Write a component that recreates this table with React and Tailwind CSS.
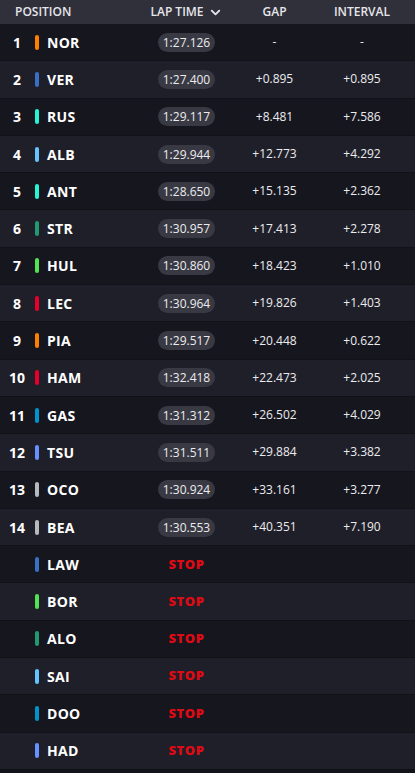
import { ChevronDown } from "lucide-react";

const drivers = [
  { pos: 1, code: "NOR", color: "#ff8000", lap: "1:27.126", gap: "-", int: "-" },
  { pos: 2, code: "VER", color: "#3671c6", lap: "1:27.400", gap: "+0.895", int: "+0.895" },
  { pos: 3, code: "RUS", color: "#27f4d2", lap: "1:29.117", gap: "+8.481", int: "+7.586" },
  { pos: 4, code: "ALB", color: "#64c4ff", lap: "1:29.944", gap: "+12.773", int: "+4.292" },
  { pos: 5, code: "ANT", color: "#27f4d2", lap: "1:28.650", gap: "+15.135", int: "+2.362" },
  { pos: 6, code: "STR", color: "#229971", lap: "1:30.957", gap: "+17.413", int: "+2.278" },
  { pos: 7, code: "HUL", color: "#52e252", lap: "1:30.860", gap: "+18.423", int: "+1.010" },
  { pos: 8, code: "LEC", color: "#e8002d", lap: "1:30.964", gap: "+19.826", int: "+1.403" },
  { pos: 9, code: "PIA", color: "#ff8000", lap: "1:29.517", gap: "+20.448", int: "+0.622" },
  { pos: 10, code: "HAM", color: "#e8002d", lap: "1:32.418", gap: "+22.473", int: "+2.025" },
  { pos: 11, code: "GAS", color: "#0093cc", lap: "1:31.312", gap: "+26.502", int: "+4.029" },
  { pos: 12, code: "TSU", color: "#6692ff", lap: "1:31.511", gap: "+29.884", int: "+3.382" },
  { pos: 13, code: "OCO", color: "#b6babd", lap: "1:30.924", gap: "+33.161", int: "+3.277" },
  { pos: 14, code: "BEA", color: "#b6babd", lap: "1:30.553", gap: "+40.351", int: "+7.190" },
  { pos: null, code: "LAW", color: "#3671c6", stop: true },
  { pos: null, code: "BOR", color: "#52e252", stop: true },
  { pos: null, code: "ALO", color: "#229971", stop: true },
  { pos: null, code: "SAI", color: "#64c4ff", stop: true },
  { pos: null, code: "DOO", color: "#0093cc", stop: true },
  { pos: null, code: "HAD", color: "#6692ff", stop: true },
];

const font = { fontFamily: '"Open Sans", "Liberation Sans", sans-serif' };

const App = () => {
  return (
    <div className="w-[415px] h-[773px] bg-[#13131b] text-white overflow-hidden" style={font}>
      <div className="flex items-center h-[24px] bg-[#30303b] text-[12px] font-semibold text-[#e6e6ea]">
        <div className="w-[142px] pl-[15px]">POSITION</div>
        <div className="w-[89px] flex items-center justify-center gap-[4px]">
          LAP TIME
          <ChevronDown size={15} strokeWidth={3} />
        </div>
        <div className="w-[87px] text-center">GAP</div>
        <div className="w-[88px] text-center">INTERVAL</div>
      </div>

      {drivers.map((d, i) => (
        <div
          key={d.code}
          className={`flex items-center h-[37.3px] border-b border-[#111118] ${
            i % 2 === 0 ? "bg-[#16161f]" : "bg-[#1f1f29]"
          }`}
        >
          <div className="w-[142px] flex items-center">
            <div className="w-[34px] text-center text-[14px] font-bold">{d.pos}</div>
            <div className="w-[4px] h-[15px] rounded-[2px] ml-[1px]" style={{ backgroundColor: d.color }} />
            <div className="ml-[8px] text-[14px] font-bold tracking-[0.3px]">{d.code}</div>
          </div>
          <div className="w-[89px] flex justify-center">
            {d.stop ? (
              <span className="text-[13px] font-extrabold text-[#de0a14] tracking-[0.6px]">STOP</span>
            ) : (
              <span className="bg-[#393943] rounded-full px-[5px] h-[19px] leading-[19px] text-[12px] font-medium text-[#ececef]">
                {d.lap}
              </span>
            )}
          </div>
          <div className="w-[87px] text-center text-[12px] font-medium text-[#ececef]">{d.gap}</div>
          <div className="w-[88px] text-center text-[12px] font-medium text-[#ececef]">{d.int}</div>
        </div>
      ))}
    </div>
  );
};

export default App;
